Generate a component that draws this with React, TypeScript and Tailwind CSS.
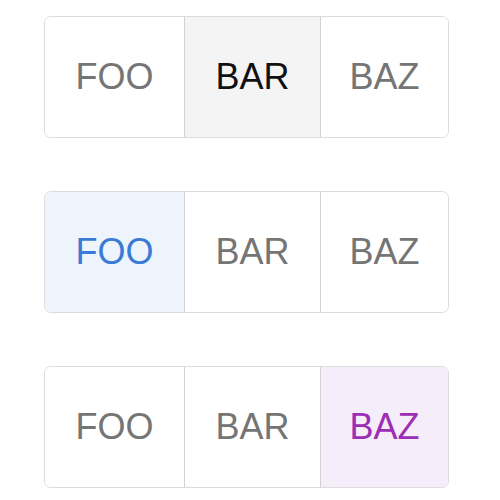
import clsx from "clsx";

type Tone = "neutral" | "blue" | "purple";

const items = ["FOO", "BAR", "BAZ"];

const toneClasses: Record<Tone, string> = {
    neutral: "bg-[#f4f4f4] text-[#111111]",
    blue: "bg-[#eef4fc] text-[#3a7bd5]",
    purple: "bg-[#f5eefa] text-[#9c2db5]",
};

function SegmentedControl({ selected, tone }: { selected: number; tone: Tone }) {
    return (
        <div className="flex w-[405px] h-[122px] rounded-[7px] border-[1.5px] border-[#dcdcdc] overflow-hidden">
            {items.map((label, i) => (
                <div
                    key={label}
                    className={clsx(
                        "flex items-center justify-center text-[36px] leading-none",
                        i === 0 && "w-[139px]",
                        i === 1 && "w-[136px] border-l-[1.5px] border-[#d2d2d2]",
                        i === 2 && "flex-1 border-l-[1.5px] border-[#d2d2d2]",
                        i === selected ? toneClasses[tone] : "bg-white text-[#757575]"
                    )}
                >
                    {label}
                </div>
            ))}
        </div>
    );
}

export default function App() {
    return (
        <div
            className="w-[500px] h-[500px] bg-white flex flex-col gap-[53px] pl-[44px] pt-[16px]"
            style={{ fontFamily: '"Liberation Sans", Arial, sans-serif' }}
        >
            <SegmentedControl selected={1} tone="neutral" />
            <SegmentedControl selected={0} tone="blue" />
            <SegmentedControl selected={2} tone="purple" />
        </div>
    );
}
